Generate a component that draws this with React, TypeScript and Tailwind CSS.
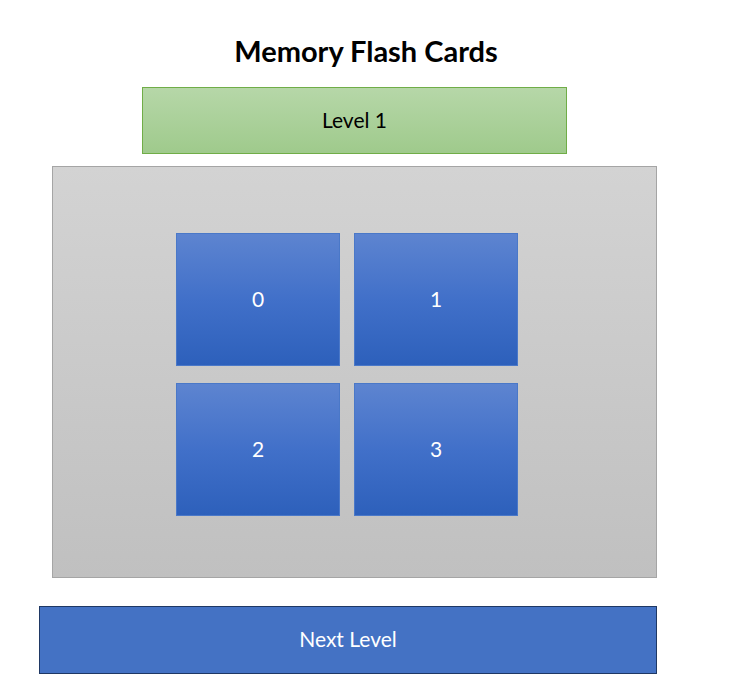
import React from "react";

const cards = ["0", "1", "2", "3"];

export default function App() {
  return (
    <div
      className="w-[745px] h-[688px] bg-white flex flex-col"
      style={{ fontFamily: "Lato, 'Open Sans', sans-serif" }}
    >
      <h1 className="mt-[36px] w-[732px] h-[30px] leading-[30px] text-center text-[29px] font-bold text-black">
        Memory Flash Cards
      </h1>
      <div className="mt-[21px] ml-[142px] w-[425px] h-[67px] border border-[#70ad47] bg-gradient-to-b from-[#b6d7a8] to-[#9fca8c] flex items-center justify-center pb-[2px] text-[21px] text-black">
        Level 1
      </div>
      <div className="mt-[12px] ml-[52px] w-[605px] h-[412px] border border-[#a5a5a5] bg-gradient-to-b from-[#d3d3d3] to-[#c0c0c0] pl-[123px] pt-[66px]">
        <div className="grid grid-cols-[164px_164px] auto-rows-[133px] gap-x-[14px] gap-y-[17px]">
          {cards.map((c) => (
            <div
              key={c}
              className="border border-[#4a78c8] bg-gradient-to-b from-[#5d84d0] via-[#4170c9] to-[#2d60bb] flex items-center justify-center pb-[2px] text-white text-[21px]"
            >
              {c}
            </div>
          ))}
        </div>
      </div>
      <div className="mt-[28px] ml-[39px] w-[618px] h-[68px] border border-[#1f3864] bg-[#4472c4] flex items-center justify-center pb-[2px] text-white text-[21px]">
        Next Level
      </div>
    </div>
  );
}
